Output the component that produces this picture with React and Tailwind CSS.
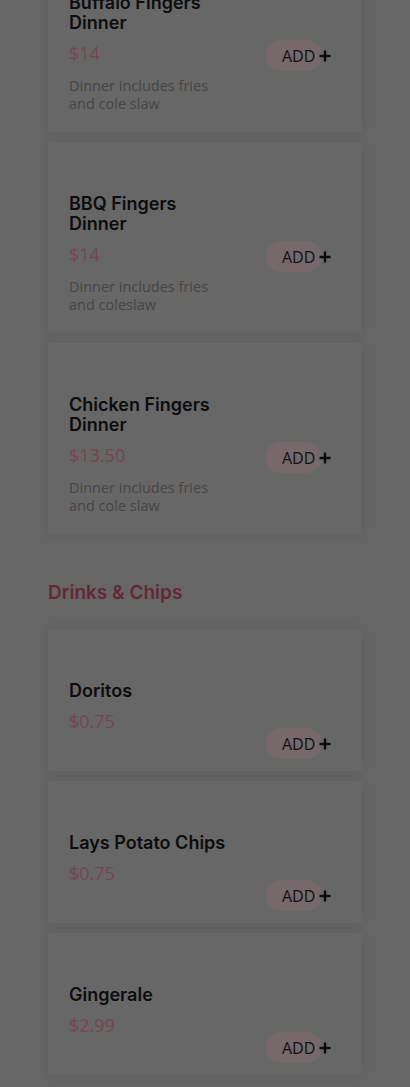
import React from "react";

const sections = [
  {
    title: null,
    items: [
      { name: "Buffalo Fingers Dinner", price: "$14", desc: "Dinner includes fries and cole slaw" },
      { name: "BBQ Fingers Dinner", price: "$14", desc: "Dinner includes fries and coleslaw" },
      { name: "Chicken Fingers Dinner", price: "$13.50", desc: "Dinner includes fries and cole slaw" },
    ],
  },
  {
    title: "Drinks & Chips",
    items: [
      { name: "Doritos", price: "$0.75" },
      { name: "Lays Potato Chips", price: "$0.75" },
      { name: "Gingerale", price: "$2.99" },
    ],
  },
];

const PlusIcon = () => (
  <svg width="12" height="12" viewBox="0 0 12 12" className="shrink-0">
    <path d="M6 0.5v11M0.5 6h11" stroke="#0a0a0a" strokeWidth="2.4" />
  </svg>
);

const MenuCard = ({ item }) => (
  <div className="flex justify-between items-start bg-[#676767] shadow-[0_0_10px_rgba(0,0,0,0.09)] pl-[21px] pr-[40px] pt-[52px] pb-[12px]">
    <div className="w-[160px]">
      <div className="text-[18px] leading-[20px] font-semibold text-[#0d0d0d] font-['Inter',sans-serif]">
        {item.name}
      </div>
      <div className="mt-2 text-[18px] leading-[24px] text-[#754550] font-['Open_Sans',sans-serif]">
        {item.price}
      </div>
      {item.desc && (
        <div className="mt-[12px] mb-[7px] text-[14.5px] leading-[18px] text-[#454545] font-['Open_Sans',sans-serif]">
          {item.desc}
        </div>
      )}
    </div>

    {/* add button */}
    <div className="mt-[47px] relative w-[57px] h-[31px] rounded-full bg-[#76686b]">
      <div className="absolute left-[17px] top-0 h-full flex items-center gap-[4px] whitespace-nowrap">
        <span className="text-[16px] text-[#111] font-['Open_Sans',sans-serif]">ADD</span>
        <PlusIcon />
      </div>
    </div>
  </div>
);

const App = () => {
  return (
    <div className="min-h-screen bg-[#666666] px-[48px] overflow-hidden">
      <div className="-mt-[59px] pb-10">
        {sections.map((section, si) => (
          <div key={si}>
            {section.title && (
              <h2 className="mt-[45px] mb-[22px] text-[19px] leading-[28px] font-semibold text-[#662838] font-['Inter',sans-serif]">
                {section.title}
              </h2>
            )}
            <div className="flex flex-col gap-[10px]">
              {section.items.map((item, i) => (
                <MenuCard key={i} item={item} />
              ))}
            </div>
          </div>
        ))}
      </div>
    </div>
  );
};

export default App;
